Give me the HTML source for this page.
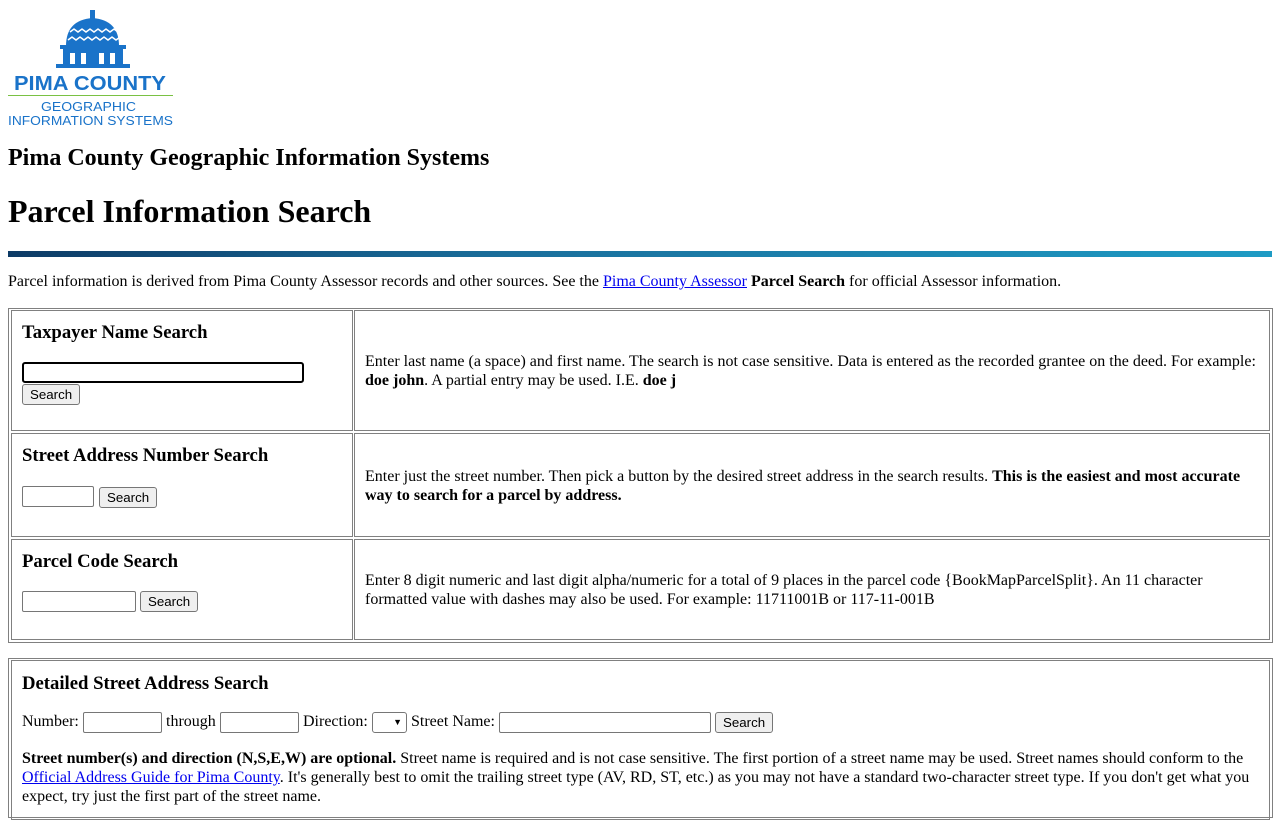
<!DOCTYPE html>
<html><head><style>
body{margin:0;font-family:"Liberation Serif",serif;font-size:16px;color:#000;background:#fff;position:relative;width:1280px;height:800px;overflow:hidden}
.a{position:absolute;white-space:nowrap}
h2{font-size:24px;margin:0}
h1{font-size:32px;margin:0}
.box{position:absolute;border:1px solid #808080;box-sizing:border-box}
.c{position:absolute;border:1px solid #808080;box-sizing:border-box}
h3{font-size:18.7px;margin:0;position:absolute;white-space:nowrap}
input[type=text]{position:absolute;height:21px;box-sizing:border-box;border:1px solid #767676;border-radius:2px;padding:0}
button{position:absolute;height:21px;font-family:"Liberation Sans",sans-serif;font-size:13.3px;background:#efefef;border:1px solid #767676;border-radius:3px;padding:0 7px;box-sizing:border-box}
.t{position:absolute;font-size:16px;line-height:19px}
a{color:#00e}
</style></head><body>
<svg class="a" style="left:8px;top:10px" width="170" height="118" viewBox="0 0 170 118">
<rect x="82" y="0" width="5" height="10" fill="#1a73c9"/>
<path d="M58 36 Q58 10 84.5 8 Q111 10 111 36Z" fill="#1a73c9"/>
<path d="M62 22 l4 -3 4 3 4 -3 4 3 4 -3 4 3 4 -3 4 3 4 -3 4 3 4 -3 4 3 M60 30 l4 -3 4 3 4 -3 4 3 4 -3 4 3 4 -3 4 3 4 -3 4 3 4 -3 4 3 4 -3 4 3" stroke="#fff" stroke-width="1.5" fill="none"/>
<rect x="52" y="35" width="66" height="4" fill="#1a73c9"/>
<rect x="55" y="39" width="60" height="17" fill="#1a73c9"/>
<rect x="62" y="43" width="5" height="12" fill="#fff"/><rect x="73" y="43" width="5" height="12" fill="#fff"/><rect x="91" y="43" width="5" height="12" fill="#fff"/><rect x="102" y="43" width="5" height="12" fill="#fff"/>
<rect x="48" y="54" width="74" height="4" fill="#1a73c9"/>
<text x="6" y="80" font-family="Liberation Sans,sans-serif" font-size="20" font-weight="bold" fill="#1a73c9" textLength="152" lengthAdjust="spacingAndGlyphs">PIMA COUNTY</text>
<rect x="0" y="85" width="165" height="1" fill="#7ac143"/>
<text x="33" y="101" font-family="Liberation Sans,sans-serif" font-size="12.5" fill="#1a73c9" textLength="95" lengthAdjust="spacingAndGlyphs">GEOGRAPHIC</text>
<text x="0" y="115" font-family="Liberation Sans,sans-serif" font-size="12.5" fill="#1a73c9" textLength="165" lengthAdjust="spacingAndGlyphs">INFORMATION SYSTEMS</text>
</svg>
<h2 class="a" style="left:8px;top:145px">Pima County Geographic Information Systems</h2>
<h1 class="a" style="left:8px;top:193px">Parcel Information Search</h1>
<div class="a" style="left:8px;top:251px;width:1264px;height:6px;background:linear-gradient(90deg,#0d3b66,#1a6f9c 40%,#1e9bc4)"></div>
<div class="a" style="left:8px;top:273px;font-size:16px">Parcel information is derived from Pima County Assessor records and other sources. See the <a href="#">Pima County Assessor</a> <b>Parcel Search</b> for official Assessor information.</div>

<div class="box" style="left:8px;top:308px;width:1265px;height:335px"></div>
<div class="c" style="left:11px;top:310px;width:342px;height:121px"></div>
<div class="c" style="left:354px;top:310px;width:916px;height:121px"></div>
<div class="c" style="left:11px;top:433px;width:342px;height:104px"></div>
<div class="c" style="left:354px;top:433px;width:916px;height:104px"></div>
<div class="c" style="left:11px;top:539px;width:342px;height:101px"></div>
<div class="c" style="left:354px;top:539px;width:916px;height:101px"></div>

<h3 style="left:22px;top:322px">Taxpayer Name Search</h3>
<input type="text" style="left:22px;top:362px;width:282px;border:2px solid #000;border-radius:3px">
<button style="left:22px;top:384px">Search</button>
<div class="t" style="left:365px;top:352px;width:895px">Enter last name (a space) and first name. The search is not case sensitive. Data is entered as the recorded grantee on the deed. For example: <b>doe john</b>. A partial entry may be used. I.E. <b>doe j</b></div>

<h3 style="left:22px;top:445px">Street Address Number Search</h3>
<input type="text" style="left:22px;top:486px;width:72px">
<button style="left:99px;top:487px">Search</button>
<div class="t" style="left:365px;top:467px;width:895px">Enter just the street number. Then pick a button by the desired street address in the search results. <b>This is the easiest and most accurate way to search for a parcel by address.</b></div>

<h3 style="left:22px;top:551px">Parcel Code Search</h3>
<input type="text" style="left:22px;top:591px;width:114px">
<button style="left:140px;top:591px">Search</button>
<div class="t" style="left:365px;top:571px;width:895px">Enter 8 digit numeric and last digit alpha/numeric for a total of 9 places in the parcel code {BookMapParcelSplit}. An 11 character formatted value with dashes may also be used. For example: 11711001B or 117-11-001B</div>

<div class="box" style="left:8px;top:658px;width:1265px;height:160px"></div>
<div class="c" style="left:11px;top:660px;width:1259px;height:160px"></div>
<h3 style="left:22px;top:673px">Detailed Street Address Search</h3>
<div class="a" style="left:22px;top:713px;font-size:16px">Number:</div>
<input type="text" style="left:83px;top:712px;width:79px">
<div class="a" style="left:166px;top:713px;font-size:16px">through</div>
<input type="text" style="left:220px;top:712px;width:79px">
<div class="a" style="left:303px;top:713px;font-size:16px">Direction:</div>
<div class="a" style="left:372px;top:712px;width:35px;height:21px;border:1px solid #767676;border-radius:3px;box-sizing:border-box;font-size:9px;text-align:right;padding:4px 4px 0 0">&#9660;</div>
<div class="a" style="left:411px;top:713px;font-size:16px">Street Name:</div>
<input type="text" style="left:499px;top:712px;width:212px">
<button style="left:715px;top:712px">Search</button>
<div class="t" style="left:22px;top:749px;width:1240px"><b>Street number(s) and direction (N,S,E,W) are optional.</b> Street name is required and is not case sensitive. The first portion of a street name may be used. Street names should conform to the <a href="#">Official Address Guide for Pima County</a>. It's generally best to omit the trailing street type (AV, RD, ST, etc.) as you may not have a standard two-character street type. If you don't get what you expect, try just the first part of the street name.</div>
</body></html>
